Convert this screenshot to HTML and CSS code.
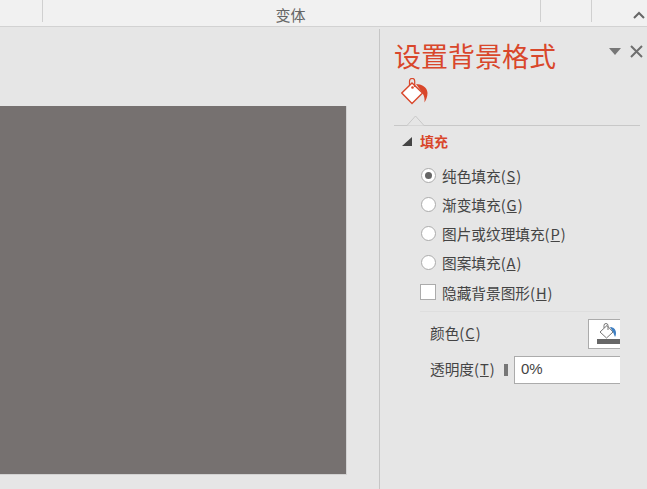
FILE: index.html
```html
<!DOCTYPE html>
<html lang="zh">
<head>
<meta charset="utf-8">
<title>设置背景格式</title>
<link rel="stylesheet" href="styles.css">
</head>
<body>
<header class="ribbon">
  <div class="group g1"></div>
  <div class="group g2">变体</div>
  <div class="group g3"></div>
  <div class="group g4">
    <svg class="collapse" width="12" height="8" viewBox="0 0 12 8"><path d="M1 7 L6 2 L11 7" fill="none" stroke="#666" stroke-width="2"/></svg>
  </div>
</header>
<main class="work">
  <section class="canvas"><div class="slide"></div></section>
  <div class="divider"></div>
  <aside class="panel">
    <div class="titlebar">
      <h1 class="title">设置背景格式</h1>
      <div class="winbtns">
        <svg width="12" height="7" viewBox="0 0 12 7"><path d="M0 0 H12 L6 7 Z" fill="#777"/></svg>
        <svg width="13" height="13" viewBox="0 0 13 13"><path d="M1 1 L12 12 M12 1 L1 12" stroke="#6e6e6e" stroke-width="2"/></svg>
      </div>
    </div>
    <div class="tabicon">
      <svg width="28" height="27" viewBox="0 0 28 27">
        <path d="M11 5 L21.5 15 L11 25.5 L0.8 15 Z" fill="#fff" stroke="#d9472b" stroke-width="1.4"/>
        <path d="M8.5 7 V3 A2.6 2.6 0 0 1 13.7 3 V9" fill="none" stroke="#d9472b" stroke-width="1.2"/>
        <circle cx="11.5" cy="9.5" r="1.3" fill="#d9472b"/>
        <path d="M15 6 C20 6 26.5 9 26.5 15 C26.5 19 25 22 23.5 24.5 C23.8 20.5 23.5 17.5 20 13 Z" fill="#d9472b"/>
      </svg>
    </div>
    <div class="tabline">
      <svg class="notch" width="17" height="11" viewBox="0 0 17 11"><path d="M0 10.5 L8.5 1 L17 10.5" fill="#e6e6e6" stroke="#c8c8c8"/></svg>
    </div>
    <div class="section-head">
      <svg width="10" height="10" viewBox="0 0 10 10"><path d="M10 0 V9 H0 Z" fill="#444"/></svg>
      <span class="section-name">填充</span>
    </div>
    <ul class="options">
      <li class="opt"><span class="radio on"></span>纯色填充(<u>S</u>)</li>
      <li class="opt"><span class="radio"></span>渐变填充(<u>G</u>)</li>
      <li class="opt"><span class="radio"></span>图片或纹理填充(<u>P</u>)</li>
      <li class="opt"><span class="radio"></span>图案填充(<u>A</u>)</li>
      <li class="opt check-row"><span class="check"></span>隐藏背景图形(<u>H</u>)</li>
    </ul>
    <div class="props">
      <div class="prop color-row">
        <span class="label">颜色(<u>C</u>)</span>
        <span class="colorbtn">
          <svg width="23" height="22" viewBox="0 0 23 22">
            <path d="M3 9 L10 2.5 L16 9 L9.5 15 Z" fill="#fff" stroke="#777"/>
            <path d="M7 5 V2.5 A2 2 0 0 1 11 2.5 V7" fill="none" stroke="#777"/>
            <path d="M13 4 C16 4 19 6 19 10 C19 12 18.5 13 18 14 L16 9 Z" fill="#3f7fc1"/>
            <rect x="0" y="16" width="23" height="5" fill="#666"/>
          </svg>
        </span>
      </div>
      <div class="prop alpha-row">
        <span class="label alpha-label">透明度(<u>T</u>)</span>
        <span class="thumb"></span>
        <span class="input">0%</span>
      </div>
    </div>
  </aside>
</main>
</body>
</html>
```

FILE: styles.css
```css
* { box-sizing: border-box; }
html, body { margin: 0; padding: 0; }
body {
  width: 647px;
  height: 489px;
  overflow: hidden;
  background: #e6e6e6;
  font-family: "Noto Sans CJK SC", "Liberation Sans", sans-serif;
  color: #444;
}
u { padding: 0 1px; }
.ribbon {
  display: flex;
  height: 27px;
  background: #f1f1f1;
  border-bottom: 1px solid #d2d2d2;
}
.group { flex: none; height: 22px; border-right: 1px solid #d0d0d0; }
.g1 { width: 43px; }
.g2 {
  width: 498px;
  padding: 6px 2px 0 0;
  font-size: 15px;
  line-height: 18px;
  text-align: center;
  color: #666;
}
.g3 { width: 51px; }
.g4 { flex: 1; border-right: 0; position: relative; }
.collapse { position: absolute; right: 2px; top: 11px; }
.work { display: flex; height: 462px; }
.canvas {
  flex: none;
  width: 379px;
  padding-top: 79px;
}
.slide {
  width: 347px;
  height: 369px;
  background: #767170;
  border-right: 1px solid #d2d2d2;
  border-bottom: 1px solid #d2d2d2;
}
.divider { flex: none; width: 1px; margin-top: 2px; background: #c6c6c6; }
.panel { flex: 1; padding-left: 14px; padding-right: 7px; min-width: 0; }
.titlebar { display: flex; justify-content: space-between; height: 51px; }
.title {
  margin: 9px 0 0;
  font-size: 27px;
  line-height: 40px;
  font-weight: 400;
  color: #d9472b;
  white-space: nowrap;
}
.winbtns { display: flex; align-items: center; gap: 9px; height: 13px; margin-top: 18px; margin-right: -3px; }
.tabicon { height: 47px; padding-left: 7px; }
.tabline { position: relative; height: 1px; background: #c8c8c8; }
.notch { position: absolute; left: 13px; top: -10px; }
.section-head {
  display: flex;
  align-items: center;
  gap: 8px;
  height: 32px;
  padding-left: 8px;
}
.section-name { font-size: 14px; font-weight: 700; color: #d9472b; line-height: 30px; padding-bottom: 2px; }
.options { list-style: none; margin: 3px 0 0; padding: 0 0 0 27px; }
.opt {
  display: flex;
  align-items: center;
  height: 29px;
  font-size: 14.67px;
  color: #444;
  white-space: nowrap;
}
.radio {
  flex: none;
  width: 15px;
  height: 15px;
  margin-right: 6px;
  border: 1px solid #ababab;
  border-radius: 50%;
  background: #fff;
  display: flex;
  align-items: center;
  justify-content: center;
}
.radio.on::after {
  content: "";
  width: 7px;
  height: 7px;
  border-radius: 50%;
  background: #666;
}
.check {
  flex: none;
  width: 16px;
  height: 16px;
  margin-left: -1px;
  margin-right: 6px;
  border: 1px solid #ababab;
  background: #fff;
}
.check-row { height: 30px; }
.props {
  margin: 4px 0 0 26px;
  width: 200px;
  border-top: 1px solid #dedede;
  padding-left: 10px;
}
.prop { display: flex; align-items: center; font-size: 14.67px; color: #444; white-space: nowrap; }
.label { padding-bottom: 3px; }
.color-row { height: 30px; margin-top: 7px; justify-content: space-between; }
.colorbtn {
  display: block;
  width: 32px;
  height: 30px;
  background: #fff;
  border: 1px solid #ababab;
  border-right: 0;
  padding: 3px 0 0 8px;
  overflow: hidden;
}
.colorbtn svg { display: block; }
.alpha-row { height: 28px; margin-top: 7px; }
.alpha-label { flex: none; width: 74px; }
.thumb { flex: none; width: 4px; height: 12px; background: #777; margin-right: 6px; }
.input {
  flex: 1;
  height: 28px;
  line-height: 24px;
  padding-left: 6px;
  background: #fff;
  border: 1px solid #ababab;
  border-right: 0;
  font-size: 15px;
  font-family: "Liberation Sans", sans-serif;
}
```
